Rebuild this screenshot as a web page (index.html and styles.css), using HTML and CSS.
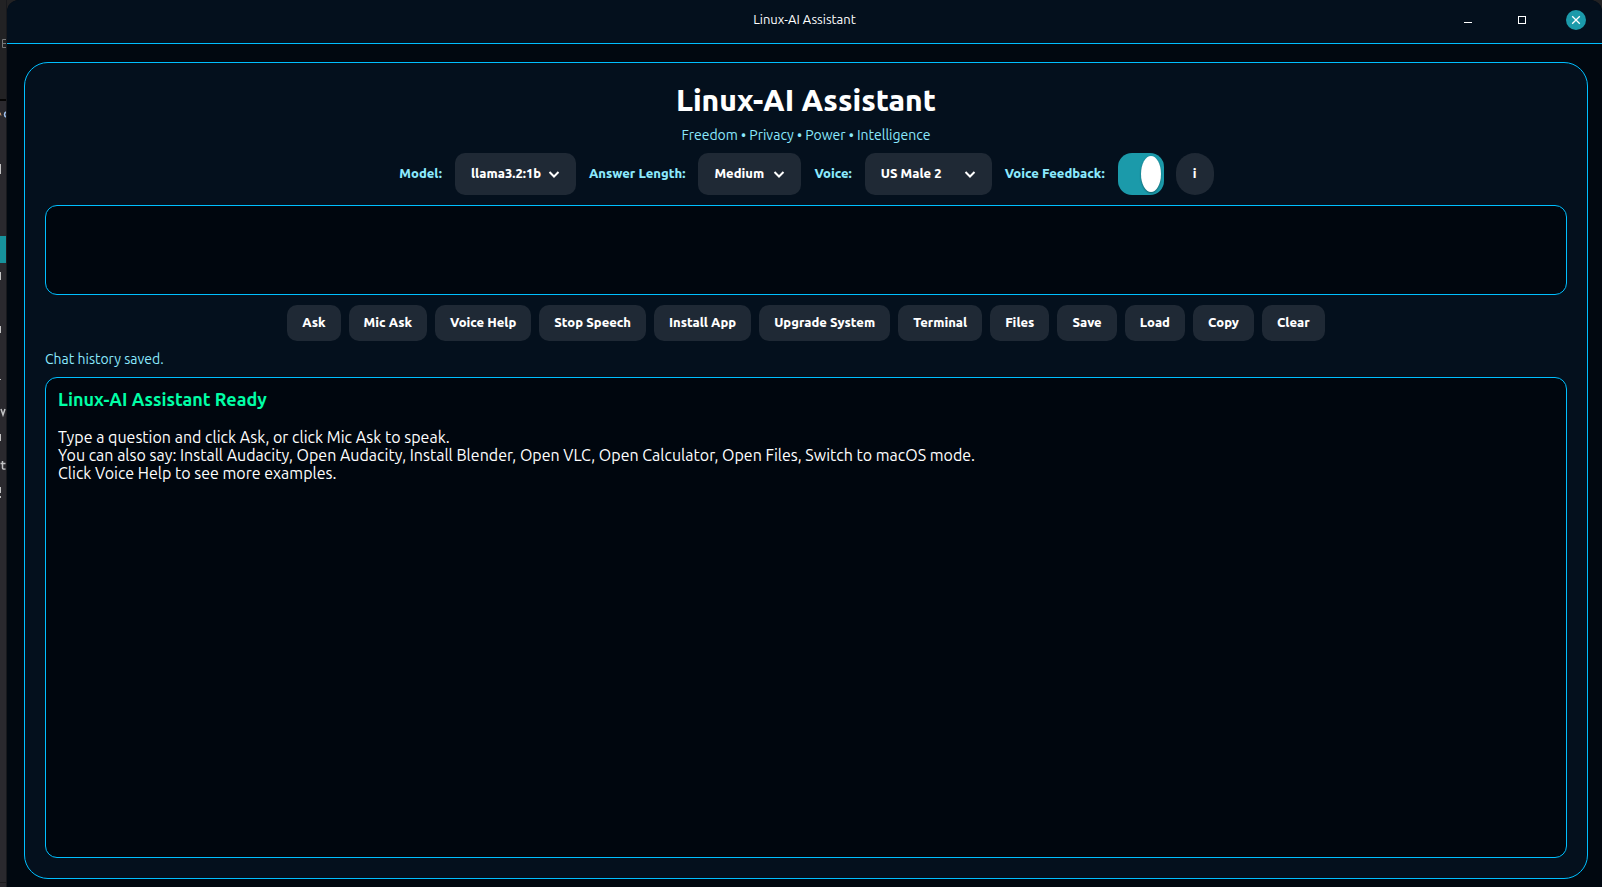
FILE: index.html
```html
<!DOCTYPE html>
<html lang="en">
<head>
<meta charset="utf-8">
<meta name="viewport" content="width=device-width, initial-scale=1">
<title>Linux-AI Assistant</title>
<link rel="stylesheet" href="styles.css">
</head>
<body>
<div class="desktop">
  <div class="behind" aria-hidden="true">
    <svg class="behind-art" width="7" height="887" viewBox="0 0 7 887">
      <rect width="7" height="100" fill="#222224"/>
      <rect y="99" width="7" height="2" fill="#050505"/>
      <rect y="101" width="7" height="786" fill="#2a292e"/>
      <rect y="236" width="6" height="27" fill="#17929c"/>
      <path d="M6 39.500H2.500V47.500H6M2.500 43.500H6" fill="none" stroke="#777879"/>
      <path d="M0 112.500l1 3" stroke="#d3a276"/>
      <path d="M6 112c-2 1-2 4 0 5" fill="none" stroke="#9fc1ee" stroke-width="1.500"/>
      <path d="M.5 164v10M.5 272v8M.5 326v7M.5 379v1M.5 434v7M.5 487v6M.5 496v2" stroke="#c4c4c5" stroke-width="1"/>
      <path d="M1 409l2 6 2-6" fill="none" stroke="#c2c3c5" stroke-width="1.500"/>
      <path d="M2.500 461v7q0 1.500 3 1M.5 463.500h5" fill="none" stroke="#c2c3c5" stroke-width="1.500"/>
      <rect y="882" width="7" height="1" fill="#1c1c1e"/>
      <rect x="6" width="1" height="887" fill="#18191d"/>
    </svg>
  </div>
  <div class="window">
    <header class="titlebar">
      <span class="titlebar-text">Linux-AI Assistant</span>
      <div class="window-buttons">
        <button class="window-button" type="button" aria-label="Minimize">
          <svg width="20" height="20" viewBox="0 0 20 20"><path d="M6 12.500h8" stroke="#fff"/></svg>
        </button>
        <button class="window-button" type="button" aria-label="Maximize">
          <svg width="20" height="20" viewBox="0 0 20 20"><rect x="6.500" y="6.500" width="7" height="7" fill="none" stroke="#fff"/></svg>
        </button>
        <button class="window-button window-close" type="button" aria-label="Close">
          <svg width="20" height="20" viewBox="0 0 20 20"><path d="M6.200 6.200l7.600 7.600M13.800 6.200l-7.600 7.600" stroke="#fff" stroke-width="1.300"/></svg>
        </button>
      </div>
    </header>
    <main class="card">
      <h1 class="title">Linux-AI Assistant</h1>
      <p class="tagline">Freedom • Privacy • Power • Intelligence</p>
      <div class="controls">
        <label class="control-label" for="model">Model:</label>
        <div class="picker picker-model">
          <select class="picker-select" id="model"><option>llama3.2:1b</option></select>
          <svg class="chevron" width="12" height="8" viewBox="0 0 12 8"><path d="M1.500 2L6 6.500 10.500 2"/></svg>
        </div>
        <label class="control-label" for="length">Answer Length:</label>
        <div class="picker picker-length">
          <select class="picker-select" id="length"><option>Medium</option></select>
          <svg class="chevron" width="12" height="8" viewBox="0 0 12 8"><path d="M1.500 2L6 6.500 10.500 2"/></svg>
        </div>
        <label class="control-label" for="voice">Voice:</label>
        <div class="picker picker-voice">
          <select class="picker-select" id="voice"><option>US Male 2</option></select>
          <svg class="chevron" width="12" height="8" viewBox="0 0 12 8"><path d="M1.500 2L6 6.500 10.500 2"/></svg>
        </div>
        <label class="control-label" for="feedback">Voice Feedback:</label>
        <input class="switch" id="feedback" type="checkbox" role="switch" checked>
        <button class="info" type="button">i</button>
      </div>
      <textarea class="question" aria-label="Question"></textarea>
      <div class="actions">
        <button class="action" type="button">Ask</button>
        <button class="action" type="button">Mic Ask</button>
        <button class="action" type="button">Voice Help</button>
        <button class="action" type="button">Stop Speech</button>
        <button class="action" type="button">Install App</button>
        <button class="action" type="button">Upgrade System</button>
        <button class="action" type="button">Terminal</button>
        <button class="action" type="button">Files</button>
        <button class="action" type="button">Save</button>
        <button class="action" type="button">Load</button>
        <button class="action" type="button">Copy</button>
        <button class="action" type="button">Clear</button>
      </div>
      <p class="status">Chat history saved.</p>
      <section class="output">
        <h2 class="output-title">Linux-AI Assistant Ready</h2>
        <p class="output-text">Type a question and click Ask, or click Mic Ask to speak.<br>You can also say: Install Audacity, Open Audacity, Install Blender, Open VLC, Open Calculator, Open Files, Switch to macOS mode.<br>Click Voice Help to see more examples.</p>
      </section>
    </main>
  </div>
</div>
</body>
</html>
```
FILE: styles.css
```css
* {
  box-sizing: border-box;
}

body {
  margin: 0;
  background: #222224;
  color: #fff;
  font-family: Ubuntu, "Noto Sans", "Open Sans", sans-serif;
  font-size: 13px;
}

h1, h2, p {
  margin: 0;
}

button, select, textarea {
  border: 0;
  color: inherit;
  font: inherit;
}

.desktop {
  display: flex;
  min-height: 100vh;
}

.behind {
  flex: none;
  width: 7px;
  background: #2a292e;
}

.behind-art {
  display: block;
}

.window {
  display: flex;
  flex: 1;
  flex-direction: column;
  min-width: 0;
  border-radius: 12px 12px 0 0;
  background: #010810;
}

.titlebar {
  display: grid;
  grid-template-columns: 1fr auto 1fr;
  align-items: center;
  height: 44px;
  padding: 0 16px 4px;
  border-bottom: 1px solid #00bfff;
  border-radius: 12px 12px 0 0;
  background: #04101d;
}

.titlebar-text {
  grid-column: 2;
  padding-bottom: 2px;
}

.window-buttons {
  display: flex;
  justify-content: flex-end;
  gap: 34px;
}

.window-button {
  width: 20px;
  height: 20px;
  padding: 0;
  border-radius: 50%;
  background: none;
}

.window-button svg {
  display: block;
}

.window-close {
  background: #1b9aaa;
}

.card {
  display: flex;
  flex: 1;
  flex-direction: column;
  margin: 18px 14px 8px 17px;
  padding: 19px 20px 20px;
  border: 1px solid #00bfff;
  border-radius: 24px;
  background: #04101d;
}

.title {
  font-size: 30px;
  font-weight: 800;
  line-height: 36px;
  text-align: center;
}

.tagline {
  margin-top: 7px;
  color: #8be9fd;
  font-size: 14px;
  line-height: 20px;
  text-align: center;
}

.controls {
  display: flex;
  align-items: center;
  justify-content: center;
  gap: 12px;
  margin-top: 8px;
  font-weight: 800;
}

.control-label {
  padding: 0 1px 2px;
  color: #8be9fd;
}

.picker {
  display: grid;
  align-items: center;
  height: 42px;
  border-radius: 10px;
  background: #1f2935;
}

.picker-select, .chevron {
  grid-area: 1 / 1;
}

.picker-select {
  appearance: none;
  width: 100%;
  height: 100%;
  padding: 0 16px 2px;
  background: none;
}

.picker-model {
  width: 121px;
}

.picker-length {
  width: 103px;
}

.picker-voice {
  width: 127px;
}

.chevron {
  justify-self: end;
  margin-right: 16px;
  fill: none;
  stroke: #fff;
  stroke-width: 2;
  pointer-events: none;
}

.switch {
  appearance: none;
  display: flex;
  justify-content: flex-end;
  width: 46px;
  height: 42px;
  margin: 0;
  padding: 3px;
  border-radius: 14px;
  background: #1b9aaa;
}

.switch::before {
  content: "";
  width: 20px;
  border-radius: 50%;
  background: #fff;
  box-shadow: 0 1px 2px rgb(0 0 0 / 40%);
}

.info {
  width: 38px;
  height: 42px;
  padding: 0 0 2px;
  border-radius: 20px;
  background: #1f2935;
}

.question {
  height: 90px;
  margin-top: 10px;
  padding: 12px;
  border: 1px solid #00bfff;
  border-radius: 12px;
  background: #00060e;
  resize: none;
}

.actions {
  display: flex;
  justify-content: center;
  gap: 8px;
  margin-top: 10px;
}

.action {
  height: 36px;
  padding: 0 15px 2px;
  border-radius: 10px;
  background: #1f2935;
  font-weight: 800;
  white-space: nowrap;
}

.status {
  margin-top: 8px;
  color: #8be9fd;
  font-size: 14px;
  line-height: 20px;
}

.output {
  flex: 1;
  margin-top: 8px;
  padding: 11px 12px;
  border: 1px solid #00bfff;
  border-radius: 12px;
  background: #00060e;
}

.output-title {
  color: #00ffa6;
  font-size: 18px;
  line-height: 20px;
}

.output-text {
  margin-top: 19px;
  font-size: 16px;
  line-height: 18px;
}
```
